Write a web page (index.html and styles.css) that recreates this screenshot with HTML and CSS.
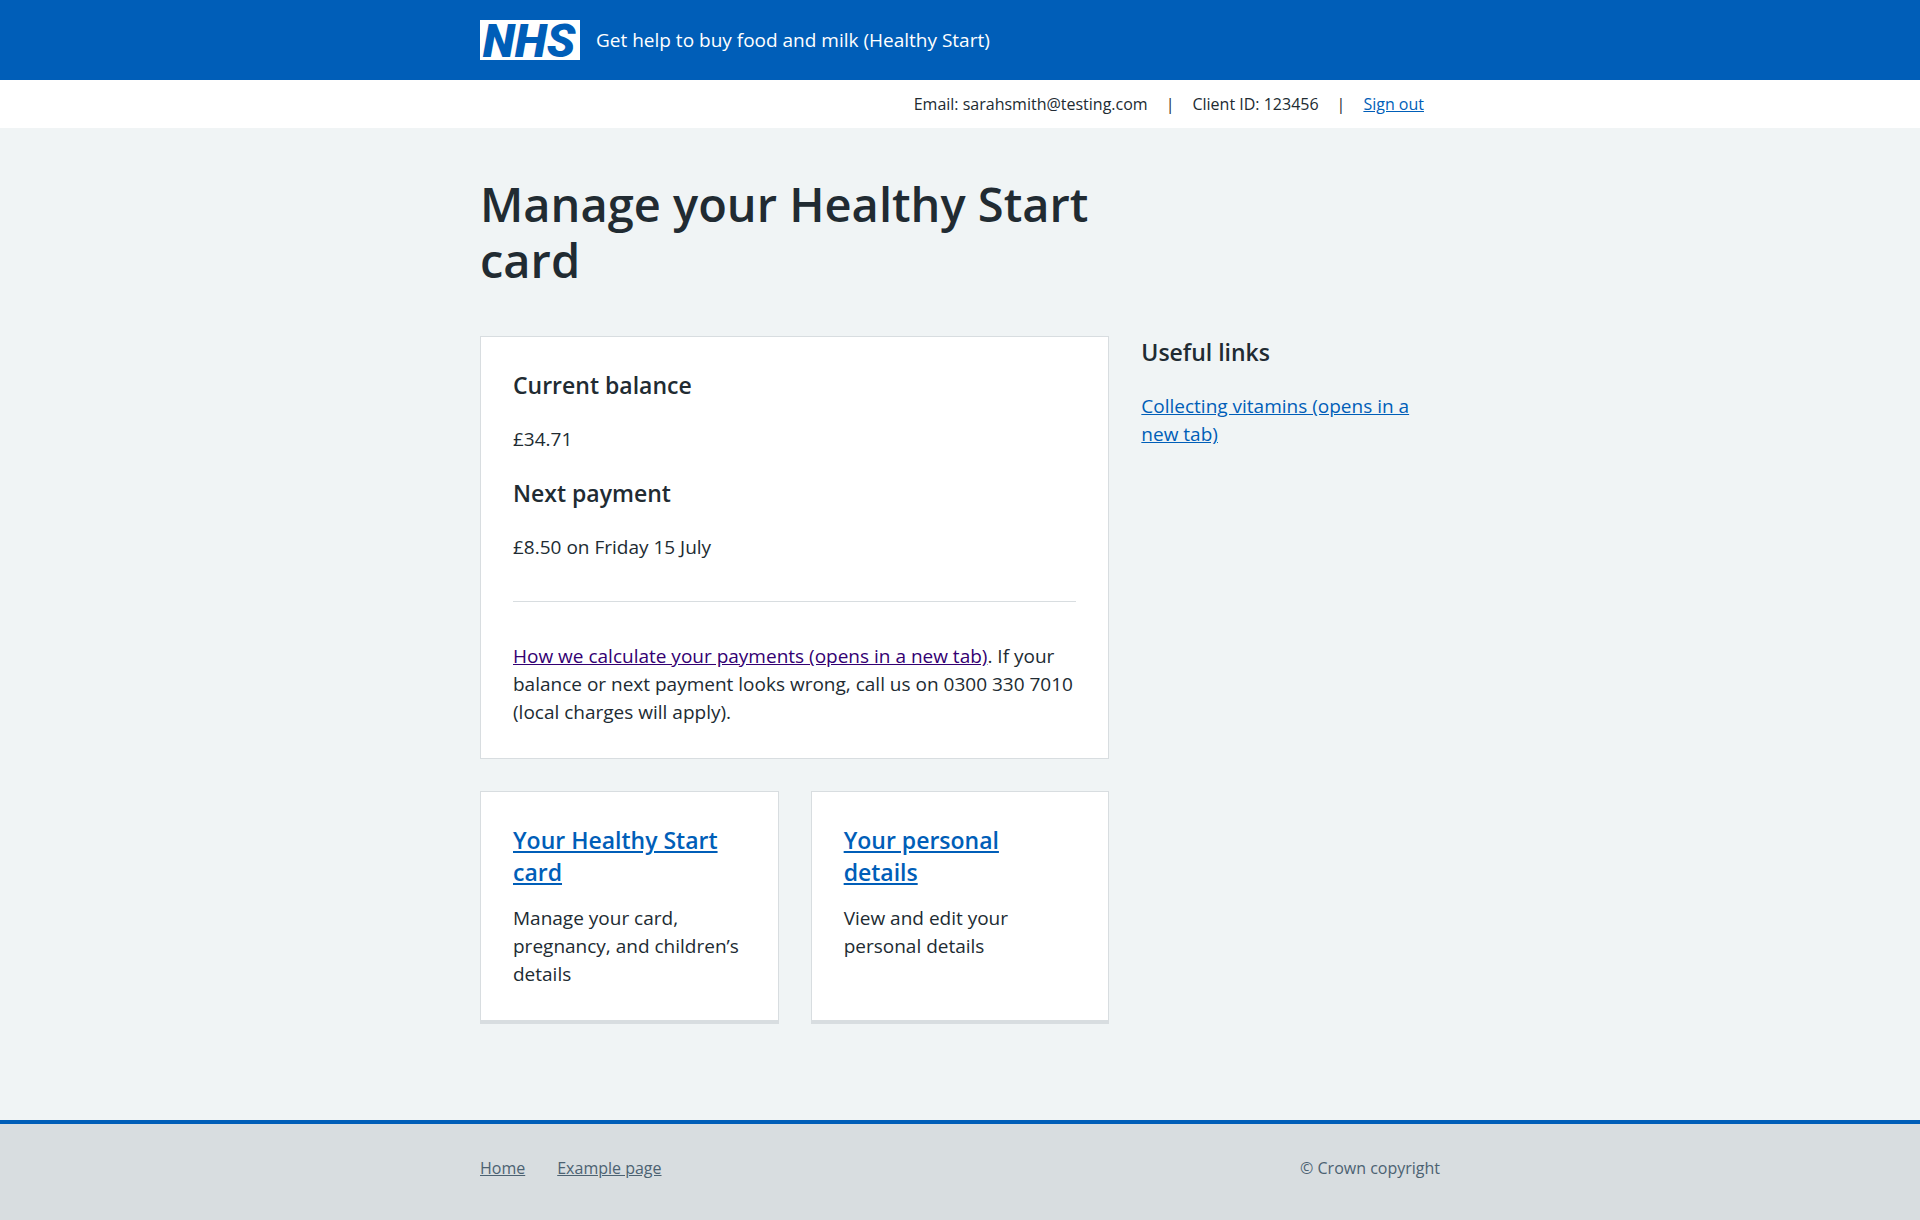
FILE: index.html
```html
<!DOCTYPE html>
<html lang="en">
<head>
  <meta charset="utf-8">
  <meta name="viewport" content="width=device-width, initial-scale=1">
  <title>Manage your Healthy Start card</title>
  <link rel="stylesheet" href="styles.css">
</head>
<body>
  <header class="header">
    <div class="container header-inner">
      <svg class="logo" viewBox="0 0 100 40" role="img" aria-label="NHS">
        <rect width="100" height="40" fill="#fff"/>
        <text class="logo-text" x="49" y="37" text-anchor="middle">NHS</text>
      </svg>
      <span class="service-name">Get help to buy food and milk (Healthy Start)</span>
    </div>
  </header>

  <div class="account">
    <ul class="container account-list">
      <li>Email: sarahsmith@testing.com</li>
      <li aria-hidden="true">|</li>
      <li>Client ID: 123456</li>
      <li aria-hidden="true">|</li>
      <li><a class="link" href="#">Sign out</a></li>
    </ul>
  </div>

  <main class="container main">
    <h1 class="page-title">Manage your Healthy Start card</h1>

    <div class="content">
      <section class="card">
        <h2 class="heading">Current balance</h2>
        <p class="text">£34.71</p>
        <h2 class="heading">Next payment</h2>
        <p class="text">£8.50 on Friday 15 July</p>
        <hr class="rule">
        <p class="text"><a class="link link-visited" href="#">How we calculate your payments (opens in a new tab)</a>. If your balance or next payment looks wrong, call us on 0300 330 7010 (local charges will apply).</p>
      </section>

      <div class="card-group">
        <section class="card card-clickable">
          <h2 class="heading"><a class="link" href="#">Your Healthy Start card</a></h2>
          <p class="text">Manage your card, pregnancy, and children’s details</p>
        </section>
        <section class="card card-clickable">
          <h2 class="heading"><a class="link" href="#">Your personal details</a></h2>
          <p class="text">View and edit your personal details</p>
        </section>
      </div>
    </div>

    <aside class="sidebar">
      <h2 class="heading">Useful links</h2>
      <p class="text"><a class="link" href="#">Collecting vitamins (opens in a new tab)</a></p>
    </aside>
  </main>

  <footer class="footer">
    <div class="container footer-inner">
      <nav class="footer-links">
        <a href="#">Home</a>
        <a href="#">Example page</a>
      </nav>
      <p class="copyright">© Crown copyright</p>
    </div>
  </footer>
</body>
</html>
```
FILE: styles.css
```css
*,
*::before,
*::after {
  box-sizing: border-box;
}

body {
  margin: 0;
  background: #f0f4f5;
  color: #212b32;
  font-family: "Open Sans", "Noto Sans", sans-serif;
  font-size: 19px;
  line-height: 28px;
}

h1,
h2,
p,
ul {
  margin: 0;
}

.container {
  width: 100%;
  max-width: 960px;
  margin: 0 auto;
}

.link {
  color: #005eb8;
}

.link-visited {
  color: #330072;
}

/* Header */

.header {
  background: #005eb8;
  color: #fff;
}

.header-inner {
  display: flex;
  align-items: center;
  gap: 16px;
  padding: 20px 0;
}

.logo {
  display: block;
  flex: none;
  width: 100px;
  height: 40px;
  overflow: visible;
}

.logo-text {
  fill: #005eb8;
  font-family: Roboto, sans-serif;
  font-size: 47px;
  font-style: italic;
  font-weight: 900;
}

/* Signed-in account bar */

.account {
  background: #fff;
  font-size: 16px;
  line-height: 24px;
}

.account-list {
  display: flex;
  flex-wrap: wrap;
  justify-content: flex-end;
  gap: 0 18px;
  padding: 12px 16px;
  list-style: none;
}

/* Main content */

.main {
  display: grid;
  grid-template-columns: repeat(3, 1fr);
  gap: 48px 32px;
  padding: 48px 0 96px;
}

.page-title {
  grid-column: 1 / 3;
  font-size: 47px;
  font-weight: 600;
  line-height: 56px;
}

.content {
  grid-column: 1 / 3;
  display: grid;
  gap: 32px;
}

.heading {
  margin-bottom: 24px;
  font-size: 23px;
  font-weight: 600;
  line-height: 32px;
}

.text + .heading {
  margin-top: 24px;
}

.rule {
  height: 1px;
  margin: 40px 0;
  border: 0;
  background: #d8dde0;
}

.card {
  padding: 32px;
  border: 1px solid #d8dde0;
  background: #fff;
}

.card-group {
  display: grid;
  grid-template-columns: repeat(2, 1fr);
  gap: 32px;
}

.card-clickable {
  border-bottom-width: 4px;
}

.card-clickable .heading {
  margin-bottom: 16px;
}

/* Footer */

.footer {
  border-top: 4px solid #005eb8;
  background: #d8dde0;
  color: #4c6272;
  font-size: 16px;
  line-height: 24px;
}

.footer a {
  color: inherit;
}

.footer-inner {
  display: flex;
  flex-wrap: wrap;
  justify-content: space-between;
  gap: 16px;
  padding: 32px 0 40px;
}

.footer-links {
  display: flex;
  gap: 32px;
}

@media (max-width: 1020px) {
  .container {
    padding-right: 32px;
    padding-left: 32px;
  }
}

@media (max-width: 768px) {
  .main,
  .card-group {
    grid-template-columns: 1fr;
  }

  .page-title,
  .content {
    grid-column: auto;
  }
}
```
